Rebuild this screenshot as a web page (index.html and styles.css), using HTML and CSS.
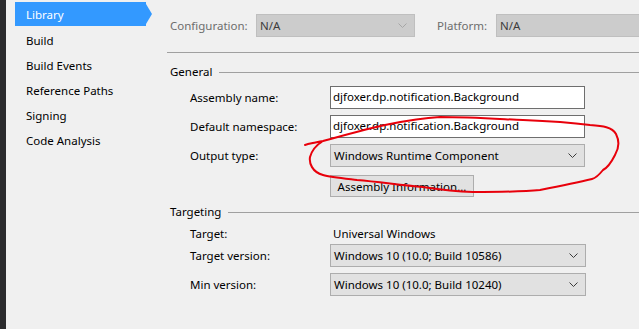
FILE: index.html
```html
<!DOCTYPE html>
<html lang="en">
<head>
    <meta charset="UTF-8">
    <title>Library Properties</title>
    <link rel="stylesheet" href="styles.css">
</head>
<body>
    <div class="strip"></div>
    <div class="sidebar">
        <div class="nav-item active">Library</div>
        <div class="nav-item">Build</div>
        <div class="nav-item">Build Events</div>
        <div class="nav-item">Reference Paths</div>
        <div class="nav-item">Signing</div>
        <div class="nav-item">Code Analysis</div>
    </div>
    <div class="main">
        <div class="topbar">
            <span class="top-label config-label">Configuration:</span>
            <div class="select disabled config-select">
                <span>N/A</span>
                <svg class="chevron" width="9" height="5" viewBox="0 0 9 5"><polyline points="0.5,0.5 4.5,4.5 8.5,0.5"/></svg>
            </div>
            <span class="top-label platform-label">Platform:</span>
            <div class="select disabled platform-select"><span>N/A</span></div>
        </div>
        <div class="divider"></div>

        <div class="group-head general-head">
            <span>General</span>
            <div class="group-line"></div>
        </div>
        <div class="row first-row">
            <label class="row-label">Assembly name:</label>
            <div class="textbox">djfoxer.dp.notification.Background</div>
        </div>
        <div class="row">
            <label class="row-label">Default namespace:</label>
            <div class="textbox">djfoxer.dp.notification.Background</div>
        </div>
        <div class="row">
            <label class="row-label">Output type:</label>
            <div class="select combo">
                <span>Windows Runtime Component</span>
                <svg class="chevron" width="9" height="5" viewBox="0 0 9 5"><polyline points="0.5,0.5 4.5,4.5 8.5,0.5"/></svg>
            </div>
        </div>
        <div class="row button-row">
            <span class="row-label"></span>
            <button class="btn">Assembly Information...</button>
        </div>

        <div class="group-head targeting-head">
            <span>Targeting</span>
            <div class="group-line"></div>
        </div>
        <div class="row target-row">
            <label class="row-label">Target:</label>
            <span class="value">Universal Windows</span>
        </div>
        <div class="row version-row">
            <label class="row-label">Target version:</label>
            <div class="select combo wide">
                <span>Windows 10 (10.0; Build 10586)</span>
                <svg class="chevron" width="9" height="5" viewBox="0 0 9 5"><polyline points="0.5,0.5 4.5,4.5 8.5,0.5"/></svg>
            </div>
        </div>
        <div class="row">
            <label class="row-label">Min version:</label>
            <div class="select combo wide">
                <span>Windows 10 (10.0; Build 10240)</span>
                <svg class="chevron" width="9" height="5" viewBox="0 0 9 5"><polyline points="0.5,0.5 4.5,4.5 8.5,0.5"/></svg>
            </div>
        </div>
    </div>

    <!-- hand drawn annotation on top of the screenshot -->
    <svg class="scribble" width="639" height="329" viewBox="0 0 639 329">
        <path d="M305,145 C312,143 318,142 323,141 C345,135 370,128 390,124 C410,120 425,118 440,117 C470,117 500,119 523,120 C550,121 575,123 590,125 C603,126 612,127 616,134 C620,142 618,150 615,155 C611,163 607,168 603,170 C599,175 596,178 592,179 C575,183 555,187 540,190 C520,192 495,192 473,192 C450,191 430,188 423,187 C400,185 380,182 357,180 C340,178 330,177 323,175 C312,172 309,163 310,157 C312,150 318,144 323,141"/>
    </svg>
</body>
</html>
```

FILE: styles.css
```css
body {
    margin: 0;
    height: 329px;
    display: flex;
    overflow: hidden;
    position: relative;
    background-color: #f0f0f0;
    font-family: "Segoe UI", "Noto Sans", sans-serif;
    font-size: 11.5px;
    color: #000;
}
.strip {
    width: 6px;
    flex-shrink: 0;
    background-color: #2b2b2d;
}
.sidebar {
    width: 154px;
    flex-shrink: 0;
    padding: 2px 0 0 9px;
    box-sizing: border-box;
}
.nav-item {
    width: 131px;
    height: 24px;
    line-height: 27px;
    padding-left: 11px;
    box-sizing: border-box;
    margin-bottom: 1px;
    white-space: nowrap;
}
.nav-item.active {
    position: relative;
    background-color: #3399ff;
    color: #fff;
    line-height: 25px;
}
.nav-item.active::after {
    content: "";
    position: absolute;
    left: 131px;
    top: 2px;
    border-top: 10px solid transparent;
    border-bottom: 10px solid transparent;
    border-left: 6px solid #3399ff;
}
.main {
    flex: 1;
    padding-top: 14px;
    min-width: 0;
}
.topbar {
    display: flex;
    align-items: center;
    height: 23px;
    padding-left: 10px;
    white-space: nowrap;
}
.top-label {
    color: #6d6d6d;
    flex-shrink: 0;
}
.config-label {
    width: 86px;
}
.platform-label {
    width: 59px;
    margin-left: 22px;
}
.select {
    height: 23px;
    box-sizing: border-box;
    display: flex;
    align-items: center;
    justify-content: space-between;
    padding: 0 7px 0 3px;
    border: 1px solid #adadad;
    background-color: #e1e1e1;
    white-space: nowrap;
    flex-shrink: 0;
}
.select.disabled {
    background-color: #cccccc;
    border-color: #bfbfbf;
    color: #3c3c3c;
}
.config-select {
    width: 159px;
}
.platform-select {
    flex: 1;
    min-width: 0;
    border-right: none;
}
.chevron {
    fill: none;
    stroke: #3c3c3c;
    stroke-width: 1;
}
.disabled .chevron {
    stroke: #a6a6a6;
}
.divider {
    height: 1px;
    margin: 15px 0 0 7px;
    background-color: #a0a0a0;
}
.group-head {
    display: flex;
    align-items: center;
    height: 16px;
    line-height: 16px;
    padding-left: 10px;
}
.general-head {
    margin-top: 11px;
}
.targeting-head {
    margin-top: 7px;
}
.group-line {
    flex: 1;
    height: 1px;
    margin-left: 7px;
    background-color: #a0a0a0;
}
.row {
    display: flex;
    align-items: center;
    height: 23px;
    margin-top: 6px;
    padding-left: 30px;
    white-space: nowrap;
}
.first-row {
    margin-top: 6px;
}
.row-label {
    width: 140px;
    flex-shrink: 0;
}
.textbox {
    width: 255px;
    height: 23px;
    box-sizing: border-box;
    border: 1px solid #6e6e6e;
    background-color: #fff;
    padding-left: 2px;
    line-height: 20px;
}
.combo {
    width: 255px;
}
.combo.wide {
    width: 256px;
}
.button-row {
    height: 22px;
    margin-top: 8px;
}
.btn {
    width: 144px;
    height: 22px;
    padding: 0;
    border: 1px solid #adadad;
    background-color: #e1e1e1;
    font-family: inherit;
    font-size: 11.5px;
    color: #000;
}
.target-row {
    height: 16px;
    margin-top: 5px;
}
.value {
    padding-left: 3px;
}
.version-row {
    margin-top: 3px;
}
.scribble {
    position: absolute;
    left: 0;
    top: 0;
    pointer-events: none;
    fill: none;
    stroke: #e8000b;
    stroke-width: 2;
    stroke-linecap: round;
    stroke-linejoin: round;
}
```
